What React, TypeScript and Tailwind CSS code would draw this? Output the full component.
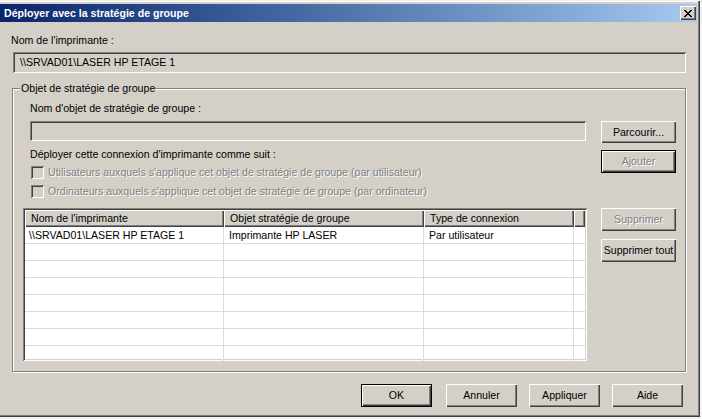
import type { ReactNode } from "react";

// classic win 3D edges
const raised =
  "shadow-[inset_1px_1px_#ffffff,inset_-1px_-1px_#404040,inset_-2px_-2px_#808080]";
const sunken =
  "shadow-[inset_1px_1px_#808080,inset_-1px_-1px_#ffffff,inset_2px_2px_#404040,inset_-2px_-2px_#d4d0c8]";
const disabledText = "text-[#808080] [text-shadow:1px_1px_0_#ffffff]";

const closeX = [
  "xx....xx",
  ".xx..xx.",
  "..xxxx..",
  "...xx...",
  "..xxxx..",
  ".xx..xx.",
  "xx....xx",
];

const CloseIcon = () => (
  <svg width="8" height="7" viewBox="0 0 8 7" shapeRendering="crispEdges">
    {closeX.map((row, y) =>
      row
        .split("")
        .map((c, x) =>
          c === "x" ? <rect key={`${x}-${y}`} x={x} y={y} width="1" height="1" fill="#000" /> : null,
        ),
    )}
  </svg>
);

interface BtnProps {
  children: ReactNode;
  width?: string;
  height?: string;
  isDefault?: boolean;
  disabled?: boolean;
  className?: string;
}

const Btn = ({
  children,
  width = "w-[75px]",
  height = "h-[23px]",
  isDefault,
  disabled,
  className = "",
}: BtnProps) => (
  <div
    className={`${width} ${height} ${className} shrink-0 ${isDefault ? "border border-black" : ""}`}
  >
    <div
      className={`w-full h-full flex items-center justify-center whitespace-nowrap ${raised} ${
        disabled ? disabledText : ""
      }`}
    >
      {children}
    </div>
  </div>
);

const CheckRow = ({ label }: { label: string }) => (
  <div className="ml-[8px] h-[19px] flex items-center">
    <div className={`w-[13px] h-[13px] bg-[#d4d0c8] ${sunken}`} />
    <span className={`ml-[4px] ${disabledText}`}>{label}</span>
  </div>
);

const columns = [
  { label: "Nom de l'imprimante", w: "w-[199px]" },
  { label: "Objet stratégie de groupe", w: "w-[200px]" },
  { label: "Type de connexion", w: "w-[150px]" },
  { label: "", w: "flex-1" },
];

const rows = [
  ["\\\\SRVAD01\\LASER HP ETAGE 1", "Imprimante HP LASER", "Par utilisateur"],
  ["", "", ""],
  ["", "", ""],
  ["", "", ""],
  ["", "", ""],
  ["", "", ""],
  ["", "", ""],
  ["", "", ""],
];

const ListView = () => (
  <div className={`mt-[7px] w-[564px] h-[153px] bg-white p-[2px] overflow-hidden ${sunken}`}>
    <div className="flex h-[17px] bg-[#d4d0c8]">
      {columns.map((c, i) => (
        <div key={i} className={`${c.w} h-full flex items-center pl-[6px] whitespace-nowrap ${raised}`}>
          {c.label}
        </div>
      ))}
    </div>
    {rows.map((r, i) => (
      <div key={i} className="flex h-[17px] border-b border-[#dcdcdc]">
        <div className="w-[199px] border-r border-[#dcdcdc] pl-[4px] flex items-center whitespace-nowrap">
          {r[0]}
        </div>
        <div className="w-[200px] border-r border-[#dcdcdc] pl-[5px] flex items-center whitespace-nowrap">
          {r[1]}
        </div>
        <div className="w-[150px] border-r border-[#dcdcdc] pl-[5px] flex items-center whitespace-nowrap">
          {r[2]}
        </div>
        <div className="flex-1" />
      </div>
    ))}
  </div>
);

export default function App() {
  return (
    <div className="w-[702px] h-[419px] overflow-hidden bg-[#f2f2f2] font-['Liberation_Sans',Arial,sans-serif] text-[10.6px] leading-[13px] text-black">
      <div className="mt-[1px] w-[700px] h-[416px] bg-[#d4d0c8] pt-[3px] pr-[3px] pb-[3px] flex flex-col shadow-[inset_-1px_-1px_#404040,inset_-2px_-2px_#808080,inset_0_1px_#ffffff]">
        {/* title bar */}
        <div className="h-[18px] shrink-0 flex items-center pl-[4px] pr-[1px] bg-linear-to-r from-[#0a246a] to-[#a6caf0]">
          <span className="text-white font-bold text-[10.6px]">Déployer avec la stratégie de groupe</span>
          <div className={`ml-auto w-[16px] h-[14px] bg-[#d4d0c8] flex items-center justify-center ${raised}`}>
            <CloseIcon />
          </div>
        </div>

        <div className="ml-[11px] mt-[12px]">Nom de l'imprimante :</div>
        <div className={`ml-[13px] mt-[5px] w-[673px] h-[21px] shrink-0 flex items-center pl-[7px] ${sunken}`}>
          \\SRVAD01\LASER HP ETAGE 1
        </div>

        {/* group box */}
        <div className="ml-[12px] mt-[15px] w-[674px] h-[284px] shrink-0 border border-[#808080] shadow-[inset_1px_1px_#ffffff,1px_1px_#ffffff]">
          <div className="w-fit -mt-[7px] ml-[7px] px-[1px] bg-[#d4d0c8]">Objet de stratégie de groupe</div>
          <div className="flex">
            <div className="ml-[10px] w-[564px] flex flex-col">
              <div className="ml-[7px] mt-[7px]">Nom d'objet de stratégie de groupe :</div>
              <div className={`ml-[7px] mt-[6px] w-[556px] h-[20px] ${sunken}`} />
              <div className="ml-[7px] mt-[7px]">Déployer cette connexion d'imprimante comme suit :</div>
              <div className="mt-[2px]">
                <CheckRow label="Utilisateurs auxquels s'applique cet objet de stratégie de groupe (par utilisateur)" />
                <CheckRow label="Ordinateurs auxquels s'applique cet objet de stratégie de groupe (par ordinateur)" />
              </div>
              <ListView />
            </div>
            <div className="ml-[14px] flex flex-col">
              <Btn height="h-[22px]" className="mt-[26px]">
                Parcourir...
              </Btn>
              <Btn isDefault disabled className="mt-[7px]">
                Ajouter
              </Btn>
              <Btn disabled className="mt-[35px]">
                Supprimer
              </Btn>
              <Btn className="mt-[8px]">Supprimer tout</Btn>
            </div>
          </div>
        </div>

        {/* dialog buttons */}
        <div className="mt-[12px] ml-[361px] flex">
          <Btn width="w-[71px]" isDefault>
            OK
          </Btn>
          <Btn width="w-[71px]" className="ml-[14px]">
            Annuler
          </Btn>
          <Btn width="w-[71px]" className="ml-[12px]">
            Appliquer
          </Btn>
          <Btn width="w-[71px]" className="ml-[12px]">
            Aide
          </Btn>
        </div>
      </div>
    </div>
  );
}
